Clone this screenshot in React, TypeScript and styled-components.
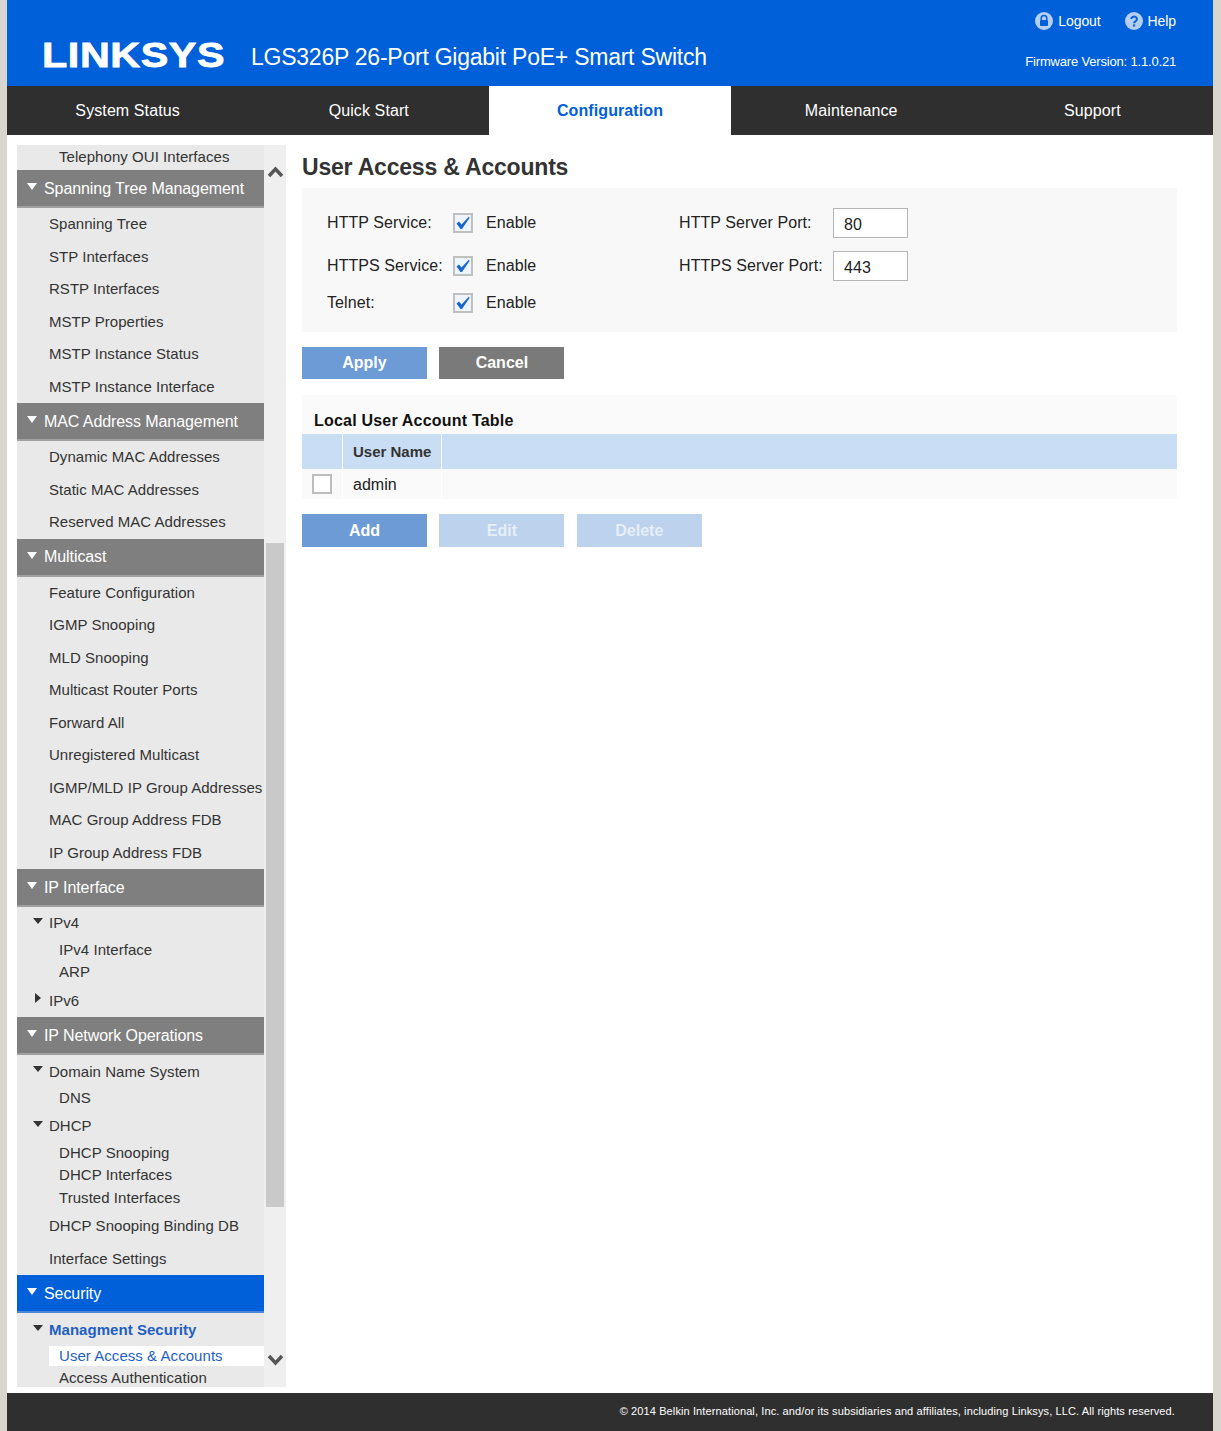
import React from 'react';
import { default as styled, createGlobalStyle } from 'styled-components';

const colours = {
  blue: '#0060d9',
  dark: '#2f2f2f',
  grey: '#7f7f7f',
  menu: '#e9e9e9',
  rail: '#efefef',
  thumb: '#c9c9c9',
  text: '#333333',
  link: '#1f5fc4',
};

const GlobalStyle = createGlobalStyle`
  html, body {
    margin: 0;
    padding: 0;
    background: #d9d5cf;
    font-family: "Liberation Sans", Arial, sans-serif;
  }
`;

const Page = styled.div`
  display: flex;
  flex-direction: column;
  width: 1206px;
  height: 1431px;
  margin-left: 7px;
  background: #ffffff;
  overflow: hidden;
`;

const Header = styled.header`
  display: flex;
  flex: 0 0 86px;
  justify-content: space-between;
  padding: 0 37px;
  background: ${colours.blue};
  color: #ffffff;
`;

const Brand = styled.div`
  display: flex;
  align-items: center;
  padding-top: 24px;
`;

const LogoBox = styled.div`
  width: 181px;
  margin: 0 28px 0 -2px;
  height: 40px;
  line-height: 40px;
`;

const LogoText = styled.span`
  display: inline-block;
  font-size: 35px;
  font-weight: 700;
  letter-spacing: 0.5px;
  -webkit-text-stroke: 0.8px #ffffff;
  transform: scaleX(1.18);
  transform-origin: left center;
`;

const ProductName = styled.div`
  font-size: 23px;
  letter-spacing: -0.24px;
  padding-top: 4px;
`;

const HeaderRight = styled.div`
  display: flex;
  flex-direction: column;
  align-items: flex-end;
`;

const TopLinks = styled.div`
  display: flex;
  gap: 24px;
  padding-top: 11px;
  height: 20px;
`;

const TopLink = styled.a`
  display: flex;
  align-items: center;
  gap: 5px;
  font-size: 14px;
  letter-spacing: -0.1px;
`;

const Firmware = styled.div`
  margin-top: 23px;
  font-size: 13px;
  letter-spacing: -0.18px;
`;

const Nav = styled.nav`
  display: grid;
  grid-template-columns: repeat(5, 1fr);
  flex: 0 0 49px;
  background: ${colours.dark};
`;

const Tab = styled.a<{ $active?: boolean }>`
  display: flex;
  align-items: center;
  justify-content: center;
  font-size: 16px;
  letter-spacing: 0.1px;
  font-weight: ${p => (p.$active ? 700 : 400)};
  color: ${p => (p.$active ? colours.blue : '#ffffff')};
  background: ${p => (p.$active ? '#ffffff' : 'transparent')};
`;

const Body = styled.div`
  display: flex;
  flex: 1 1 auto;
  min-height: 0;
  padding: 10px 36px 6px 10px;
  gap: 16px;
`;

const Sidebar = styled.aside`
  display: flex;
  flex: 0 0 269px;
  background: ${colours.rail};
  overflow: hidden;
`;

const Menu = styled.div`
  flex: 0 0 247px;
  background: ${colours.menu};
  overflow: hidden;
`;

const Section = styled.div<{ $after?: number }>`
  padding-bottom: ${p => p.$after ?? 0}px;
`;

const Scrollbar = styled.div`
  position: relative;
  flex: 1 1 auto;
`;

const ScrollThumb = styled.div`
  position: absolute;
  top: 398px;
  left: 2px;
  width: 18px;
  height: 664px;
  background: ${colours.thumb};
`;

const ScrollArrow = styled.svg<{ $top: number }>`
  position: absolute;
  top: ${p => p.$top}px;
  left: 3px;
  width: 17px;
  height: 12px;
`;

const GroupHeader = styled.div<{ $active?: boolean; $height: number }>`
  display: flex;
  align-items: center;
  gap: 7px;
  box-sizing: border-box;
  height: ${p => p.$height}px;
  padding: 1px 0 0 10px;
  font-size: 16px;
  letter-spacing: -0.08px;
  color: #ffffff;
  background: ${p => (p.$active ? colours.blue : colours.grey)};
  border-bottom: 2px solid ${p => (p.$active ? '#4a87d6' : '#a0a0a0')};
`;

const GroupArrow = styled.span`
  width: 0;
  height: 0;
  margin-top: -4px;
  border-left: 5px solid transparent;
  border-right: 5px solid transparent;
  border-top: 7px solid #ffffff;
`;

const Item = styled.div<{ $height: number }>`
  display: flex;
  align-items: center;
  box-sizing: border-box;
  height: ${p => p.$height}px;
  padding: 0 0 1px 32px;
  font-size: 15px;
  letter-spacing: 0.04px;
  color: ${colours.text};
  white-space: nowrap;
`;

const TreeItem = styled.div<{ $height: number; $selected?: boolean; $lift?: boolean }>`
  position: relative;
  display: flex;
  align-items: center;
  box-sizing: border-box;
  height: ${p => p.$height}px;
  padding: 0 0 ${p => (p.$lift ? 1 : 0)}px 32px;
  font-size: 15px;
  letter-spacing: 0.04px;
  font-weight: ${p => (p.$selected ? 700 : 400)};
  color: ${p => (p.$selected ? colours.link : colours.text)};
`;

const TreeDown = styled.span`
  position: absolute;
  left: 16px;
  top: 50%;
  margin-top: -5px;
  width: 0;
  height: 0;
  border-left: 5px solid transparent;
  border-right: 5px solid transparent;
  border-top: 6px solid #333333;
`;

const TreeRight = styled.span`
  position: absolute;
  left: 18px;
  top: 50%;
  margin-top: -7px;
  width: 0;
  height: 0;
  border-top: 5px solid transparent;
  border-bottom: 5px solid transparent;
  border-left: 6px solid #333333;
`;

const SubItem = styled.div<{ $height: number; $selected?: boolean }>`
  display: flex;
  align-items: center;
  box-sizing: border-box;
  height: ${p => p.$height}px;
  margin-left: ${p => (p.$selected ? 32 : 0)}px;
  padding: 0 0 1px ${p => (p.$selected ? 10 : 42)}px;
  font-size: 15px;
  letter-spacing: 0.05px;
  color: ${p => (p.$selected ? colours.link : colours.text)};
  background: ${p => (p.$selected ? '#ffffff' : 'transparent')};
  white-space: nowrap;
`;

const Content = styled.main`
  flex: 1 1 auto;
`;

const Title = styled.h1`
  margin: 0;
  height: 43px;
  line-height: 44px;
  font-size: 23px;
  font-weight: 700;
  letter-spacing: -0.2px;
  color: ${colours.text};
`;

const FormPanel = styled.section`
  box-sizing: border-box;
  height: 144px;
  padding: 13px 25px 0;
  background: #f8f8f8;
  font-size: 16px;
  letter-spacing: 0.08px;
  color: #222222;
`;

const FormRow = styled.div<{ $height: number }>`
  display: flex;
  align-items: center;
  height: ${p => p.$height}px;
`;

const FieldLabel = styled.label<{ $width: number }>`
  flex: 0 0 ${p => p.$width}px;
`;

const Check = styled.span`
  display: inline-flex;
  box-sizing: border-box;
  width: 20px;
  height: 20px;
  border: 2px solid #c0c0c0;
  background: #eef4fb;
`;

const CheckText = styled.span`
  flex: 0 0 206px;
  padding-left: 13px;
  box-sizing: border-box;
`;

const PortInput = styled.div`
  box-sizing: border-box;
  width: 75px;
  height: 30px;
  padding: 6px 10px 0;
  border: 1px solid #b5b5b5;
  background: #ffffff;
  line-height: 20px;
`;

const ButtonRow = styled.div<{ $top: number; $bottom: number }>`
  display: flex;
  gap: 12.4px;
  margin: ${p => p.$top}px 0 ${p => p.$bottom}px;
`;

const Button = styled.button<{ $kind: 'primary' | 'neutral' | 'disabled'; $height: number }>`
  width: 125px;
  height: ${p => p.$height}px;
  padding: 0;
  border: 0;
  font-family: inherit;
  font-size: 16px;
  font-weight: 700;
  color: ${p => (p.$kind === 'disabled' ? '#e6eef8' : '#ffffff')};
  background: ${p =>
    p.$kind === 'primary' ? '#6c9bd5' : p.$kind === 'neutral' ? '#7a7a7a' : '#bdd2ec'};
`;

const TablePanel = styled.section`
  background: #fafafa;
`;

const TableTitle = styled.div`
  height: 39px;
  padding: 9px 0 0 12px;
  box-sizing: border-box;
  line-height: 33px;
  font-size: 16px;
  letter-spacing: 0.2px;
  font-weight: 700;
  color: #111111;
`;

const TableRow = styled.div<{ $head?: boolean }>`
  display: grid;
  grid-template-columns: 41px 99px 1fr;
  height: ${p => (p.$head ? 35 : 30)}px;
  background: ${p => (p.$head ? '#c9ddf5' : 'transparent')};
`;

const Cell = styled.div<{ $head?: boolean }>`
  display: flex;
  align-items: center;
  padding: ${p => (p.$head ? 0 : 1)}px 0 0 10px;
  border-right: 1px solid #ffffff;
  box-sizing: border-box;
  font-size: ${p => (p.$head ? 15 : 16)}px;
  font-weight: ${p => (p.$head ? 700 : 400)};
  color: ${p => (p.$head ? colours.text : '#222222')};
`;

const LastCell = styled.div``;

const Box = styled.span`
  display: inline-block;
  box-sizing: border-box;
  width: 20px;
  height: 20px;
  margin-top: -2px;
  border: 2px solid #bdbdbd;
  background: #ffffff;
`;

const Footer = styled.footer`
  display: flex;
  flex: 0 0 38px;
  box-sizing: border-box;
  align-items: center;
  justify-content: flex-end;
  padding: 0 38px 2px 0;
  background: ${colours.dark};
  font-size: 11px;
  letter-spacing: 0.11px;
  color: #ffffff;
`;

type Row =
  | { kind: 'item'; label: string; height?: number }
  | { kind: 'tree'; label: string; height: number; closed?: boolean; selected?: boolean; lift?: boolean }
  | { kind: 'sub'; label: string; height: number; selected?: boolean };

const item = (label: string): Row => ({ kind: 'item', label });
const sub = (label: string, height = 22, selected = false): Row => ({ kind: 'sub', label, height, selected });

const sections: { title?: string; active?: boolean; after?: number; rows: Row[] }[] = [
  { after: 1, rows: [sub('Telephony OUI Interfaces', 24)] },
  {
    title: 'Spanning Tree Management',
    rows: ['Spanning Tree', 'STP Interfaces', 'RSTP Interfaces', 'MSTP Properties', 'MSTP Instance Status', 'MSTP Instance Interface'].map(item),
  },
  {
    title: 'MAC Address Management',
    rows: ['Dynamic MAC Addresses', 'Static MAC Addresses', 'Reserved MAC Addresses'].map(item),
  },
  {
    title: 'Multicast',
    rows: [
      'Feature Configuration',
      'IGMP Snooping',
      'MLD Snooping',
      'Multicast Router Ports',
      'Forward All',
      'Unregistered Multicast',
      'IGMP/MLD IP Group Addresses',
      'MAC Group Address FDB',
      'IP Group Address FDB',
    ].map(item),
  },
  {
    title: 'IP Interface',
    rows: [
      { kind: 'tree', label: 'IPv4', height: 32, lift: true },
      sub('IPv4 Interface'),
      sub('ARP'),
      { kind: 'tree', label: 'IPv6', height: 34, closed: true },
    ],
  },
  {
    title: 'IP Network Operations',
    rows: [
      { kind: 'tree', label: 'Domain Name System', height: 32 },
      sub('DNS'),
      { kind: 'tree', label: 'DHCP', height: 33 },
      sub('DHCP Snooping'),
      sub('DHCP Interfaces'),
      sub('Trusted Interfaces', 24),
      item('DHCP Snooping Binding DB'),
      item('Interface Settings'),
    ],
  },
  {
    title: 'Security',
    active: true,
    rows: [
      { kind: 'tree', label: 'Managment Security', height: 33, selected: true, lift: true },
      sub('User Access & Accounts', 20, true),
      sub('Access Authentication', 24),
    ],
  },
];

const tabs = ['System Status', 'Quick Start', 'Configuration', 'Maintenance', 'Support'];

const LockIcon = () => (
  <svg width="18" height="18" viewBox="0 0 18 18">
    <circle cx="9" cy="9" r="9" fill="#b4cff2" />
    <path d="M6.2 8V6.4a2.8 2.8 0 0 1 5.6 0V8" fill="none" stroke={colours.blue} strokeWidth="1.5" />
    <rect x="5" y="8" width="8" height="6" rx="1" fill={colours.blue} />
  </svg>
);

const HelpIcon = () => (
  <svg width="18" height="18" viewBox="0 0 18 18">
    <circle cx="9" cy="9" r="9" fill="#b4cff2" />
    <path d="M6.3 7a2.8 2.6 0 1 1 4.2 2.3c-1 .6-1.5 1-1.5 2" fill="none" stroke={colours.blue} strokeWidth="2" />
    <rect x="8" y="12.4" width="2.1" height="2.1" fill={colours.blue} />
  </svg>
);

const CheckMark = () => (
  <svg width="16" height="16" viewBox="0 0 16 16">
    <path d="M1.5 8.5L4 6.5l2.5 3L14 1.5l.5 1.5L7 14H5.5z" fill="#1a66cf" />
  </svg>
);

const renderRow = (row: Row) => {
  if (row.kind === 'item') return <Item key={row.label} $height={32.5}>{row.label}</Item>;
  if (row.kind === 'sub') {
    return <SubItem key={row.label} $height={row.height} $selected={row.selected}>{row.label}</SubItem>;
  }
  return (
    <TreeItem key={row.label} $height={row.height} $selected={row.selected} $lift={row.lift}>
      {row.closed ? <TreeRight /> : <TreeDown />}
      {row.label}
    </TreeItem>
  );
};

export default function App() {
  return (
    <Page>
      <GlobalStyle />
      <Header>
        <Brand>
          <LogoBox>
            <LogoText>LINKSYS</LogoText>
          </LogoBox>
          <ProductName>LGS326P 26-Port Gigabit PoE+ Smart Switch</ProductName>
        </Brand>
        <HeaderRight>
          <TopLinks>
            <TopLink><LockIcon />Logout</TopLink>
            <TopLink><HelpIcon />Help</TopLink>
          </TopLinks>
          <Firmware>Firmware Version: 1.1.0.21</Firmware>
        </HeaderRight>
      </Header>
      <Nav>
        {tabs.map(t => (
          <Tab key={t} $active={t === 'Configuration'}>{t}</Tab>
        ))}
      </Nav>
      <Body>
        <Sidebar>
          <Menu>
            {sections.map((s, i) => (
              <Section key={i} $after={s.after}>
                {s.title && (
                  <GroupHeader $active={s.active} $height={38}>
                    <GroupArrow />
                    {s.title}
                  </GroupHeader>
                )}
                {s.rows.map(renderRow)}
              </Section>
            ))}
          </Menu>
          <Scrollbar>
            <ScrollArrow $top={21} viewBox="0 0 17 12">
              <path d="M2 10l6.5-7L15 10" fill="none" stroke="#555555" strokeWidth="3.4" />
            </ScrollArrow>
            <ScrollThumb />
            <ScrollArrow $top={1209} viewBox="0 0 17 12">
              <path d="M2 2l6.5 7L15 2" fill="none" stroke="#555555" strokeWidth="3.4" />
            </ScrollArrow>
          </Scrollbar>
        </Sidebar>
        <Content>
          <Title>User Access &amp; Accounts</Title>
          <FormPanel>
            <FormRow $height={43}>
              <FieldLabel $width={126}>HTTP Service:</FieldLabel>
              <Check><CheckMark /></Check>
              <CheckText>Enable</CheckText>
              <FieldLabel $width={154}>HTTP Server Port:</FieldLabel>
              <PortInput>80</PortInput>
            </FormRow>
            <FormRow $height={43}>
              <FieldLabel $width={126}>HTTPS Service:</FieldLabel>
              <Check><CheckMark /></Check>
              <CheckText>Enable</CheckText>
              <FieldLabel $width={154}>HTTPS Server Port:</FieldLabel>
              <PortInput>443</PortInput>
            </FormRow>
            <FormRow $height={31}>
              <FieldLabel $width={126}>Telnet:</FieldLabel>
              <Check><CheckMark /></Check>
              <CheckText>Enable</CheckText>
            </FormRow>
          </FormPanel>
          <ButtonRow $top={15} $bottom={16}>
            <Button $kind="primary" $height={32}>Apply</Button>
            <Button $kind="neutral" $height={32}>Cancel</Button>
          </ButtonRow>
          <TablePanel>
            <TableTitle>Local User Account Table</TableTitle>
            <TableRow $head>
              <Cell $head />
              <Cell $head>User Name</Cell>
              <LastCell />
            </TableRow>
            <TableRow>
              <Cell><Box /></Cell>
              <Cell>admin</Cell>
              <LastCell />
            </TableRow>
          </TablePanel>
          <ButtonRow $top={15} $bottom={0}>
            <Button $kind="primary" $height={33}>Add</Button>
            <Button $kind="disabled" $height={33}>Edit</Button>
            <Button $kind="disabled" $height={33}>Delete</Button>
          </ButtonRow>
        </Content>
      </Body>
      <Footer>© 2014 Belkin International, Inc. and/or its subsidiaries and affiliates, including Linksys, LLC. All rights reserved.</Footer>
    </Page>
  );
}
